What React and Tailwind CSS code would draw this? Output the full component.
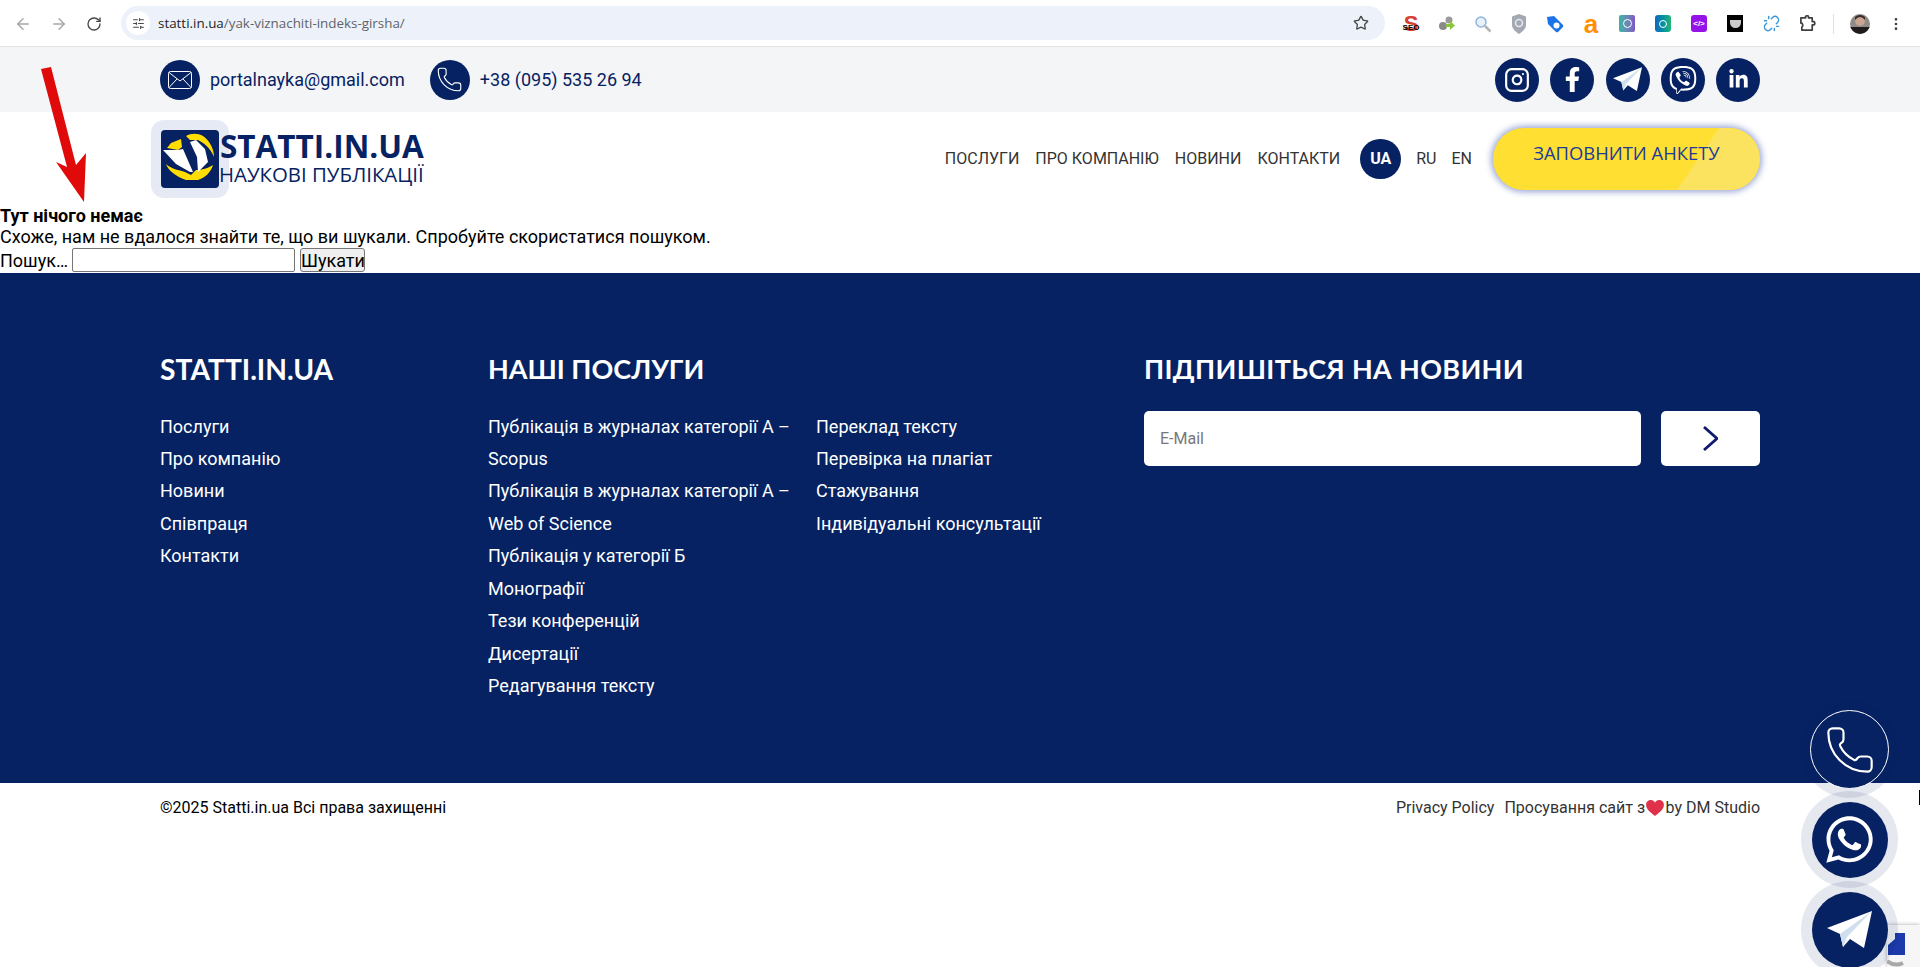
import { Phone, Instagram, ArrowLeft, ArrowRight, RotateCw, Star, EllipsisVertical, SlidersHorizontal, Unlink } from 'lucide-react';
import { FaFacebookF, FaViber, FaLinkedinIn, FaWhatsapp } from 'react-icons/fa';

const NAVY = 'bg-[#062262]';

const PlaneIcon = ({ className }) => (
    <svg viewBox="0 0 45 38" className={className}>
        <polygon points="0,17 45,0 37,37 23,28 16,36 13,23" fill="#ffffff" />
        <polygon points="13,23 45,0 20,26 16,36" fill="#cfdfee" />
    </svg>
);

const MailIcon = () => (
    <svg viewBox="0 0 24 18" className="w-[24px] h-[18px]" fill="none" stroke="#ffffff" strokeWidth="1">
        <rect x="0.5" y="0.5" width="23" height="17" rx="2" />
        <path d="M1 1.5 L12 10 L23 1.5 M1 16.5 L9 8 M23 16.5 L15 8" />
    </svg>
);

const LogoMark = () => (
    <svg viewBox="0 0 58 58" className="w-[58px] h-[58px] block">
        <rect width="58" height="58" rx="4" fill="#062262" />
        <polygon points="20,9 21,17 17,20 6,18 10,13" fill="#ffdd00" />
        <path d="M25 6 C30 3 37 3 42 6 C49 11 53 19 53 27 C51 22 47 15 37 10 L29 10 Z" fill="#ffdd00" />
        <path d="M5 34 C7 40 14 46 25 50 L37 50 C44 48 50 42 52 35 C48 38 40 40 35 40 L30 45 L24 42 C18 40 10 39 5 34 Z" fill="#ffdd00" />
        <polygon points="2,20 17,20 22,19 32,42 29,42 15,34" fill="#ffffff" />
        <polygon points="29,12 35,10 44,19 47,32 37,42 36,27" fill="#ffffff" />
    </svg>
);

// toolbar extension icons, 36px apart
const Extensions = () => (
    <div className="flex items-center">
        <span className="w-9 h-5 relative flex justify-center">
            <span className="font-['Liberation_Sans',sans-serif] font-bold text-[22px] leading-[19px] text-[#d6402f]">S</span>
            <span className="absolute top-[10px] font-['Liberation_Sans',sans-serif] font-bold text-[8px] leading-[8px] text-black">SEO</span>
        </span>
        <span className="w-9 flex justify-center">
            <svg viewBox="0 0 18 18" className="w-[18px] h-[18px]">
                <circle cx="11" cy="5" r="3.5" fill="#9a9a9a" />
                <circle cx="5" cy="11" r="4" fill="#8a8a8a" />
                <polygon points="8,9 12,9 12,6 17,10.5 12,15 12,12 8,12" fill="#8cc63f" />
            </svg>
        </span>
        <span className="w-9 flex justify-center">
            <svg viewBox="0 0 18 18" className="w-[18px] h-[18px]" fill="none">
                <circle cx="7" cy="7" r="5" fill="#e8f1fa" stroke="#8fb4dc" strokeWidth="1.5" />
                <path d="M11 11 L16.5 16.5" stroke="#b4b4b4" strokeWidth="2.5" />
            </svg>
        </span>
        <span className="w-9 flex justify-center">
            <svg viewBox="0 0 16 20" className="w-[16px] h-[20px]">
                <path d="M8 0 L15 2.5 L15 11 C15 15 11 18 8 20 C5 18 1 15 1 11 L1 2.5 Z" fill="#a3a9b3" />
                <circle cx="8" cy="9" r="3.5" fill="none" stroke="#e4e6e9" strokeWidth="1.6" />
            </svg>
        </span>
        <span className="w-9 flex justify-center">
            <svg viewBox="0 0 18 18" className="w-[18px] h-[18px]">
                <path d="M1 2 L8 1 L17 10 Q17.5 11 17 12 L12 17 Q11 17.5 10 17 L2 9 Z" fill="#1a73e8" />
                <circle cx="10.5" cy="10.5" r="3" fill="#ffffff" />
            </svg>
        </span>
        <span className="w-9 flex justify-center font-['Liberation_Sans',sans-serif] font-bold text-[26px] leading-[20px] text-[#ff9000]">a</span>
        <span className="w-9 flex justify-center"><span className="w-4 h-[17px] rounded-[2px] bg-gradient-to-r from-[#2fb5a5] to-[#7e57c2] flex items-center justify-center"><span className="w-[9px] h-[9px] rounded-full border border-white" /></span></span>
        <span className="w-9 flex justify-center"><span className="w-4 h-[17px] rounded-[3px] bg-gradient-to-r from-[#1565c0] to-[#26b573] flex items-center justify-center"><span className="w-2 h-2 rounded-full border border-white" /></span></span>
        <span className="w-9 flex justify-center"><span className="w-4 h-[17px] rounded-[3px] bg-[#9612ea] text-white text-[8px] leading-[17px] text-center font-['Liberation_Sans',sans-serif] font-bold">&lt;/&gt;</span></span>
        <span className="w-9 flex justify-center"><span className="w-4 h-[17px] bg-black flex items-center justify-center"><span className="w-[11px] h-[8px] rounded-b-full bg-[#cccccc]" /></span></span>
        <span className="w-9 flex justify-center"><Unlink size={17} className="text-[#3a96d6]" /></span>
        <span className="w-9 flex justify-center">
            <svg viewBox="0 0 18 18" className="w-[17px] h-[17px]" fill="none" stroke="#3c4043" strokeWidth="1.8" strokeLinejoin="round">
                <path d="M2 3 H7 V1.5 Q9 0 10 1.5 V3 H14 V7 H16 Q17.5 9 16 10.5 H14 V16 H3 V13 Q5 11 3 8.5 H2 Z" />
            </svg>
        </span>
        <span className="w-px h-5 bg-[#d3e3fd] mx-[8px]" />
        <svg viewBox="0 0 20 20" className="w-5 h-5 ml-[8px] rounded-full">
            <rect width="20" height="20" fill="#8f8a88" />
            <circle cx="10" cy="7" r="5" fill="#c9a592" />
            <path d="M5 6 Q10 0 15 6 L15 3 Q10 -1 5 3 Z" fill="#3a2c28" />
            <rect y="13" width="20" height="7" fill="#201c1e" />
        </svg>
        <span className="ml-[17px] w-[18px] flex justify-center"><EllipsisVertical size={16} className="text-[#3c4043]" /></span>
    </div>
);

const BrowserBar = () => (
    <div className="h-[47px] bg-white border-b border-[#e2e3e5] flex items-start font-['Open_Sans',sans-serif]">
        <div className="flex items-center h-[47px] pl-[14px] gap-[18px] w-[121px]">
            <ArrowLeft size={18} className="text-[#a6a8ab]" />
            <ArrowRight size={18} className="text-[#a6a8ab]" />
            <RotateCw size={16} className="text-[#474747]" />
        </div>
        <div className="mt-[6px] w-[1264px] h-[34px] rounded-full bg-[#edf2fa] flex items-center pl-[5px] pr-[16px]">
            <span className="w-[24px] h-[24px] rounded-full bg-white flex items-center justify-center">
                <SlidersHorizontal size={13} className="text-[#474747]" />
            </span>
            <span className="ml-[8px] text-[13.4px] text-[#1f1f1f]">statti.in.ua<span className="text-[#5f6368]">/yak-viznachiti-indeks-girsha/</span></span>
            <Star size={16} className="ml-auto text-[#474747]" />
        </div>
        <div className="h-[47px] ml-[8px] flex items-center"><Extensions /></div>
    </div>
);

const TopBar = () => (
    <div className="h-[65px] bg-[#f4f5f7]">
        <div className="w-[1600px] mx-auto h-full flex items-center justify-between text-[18px] text-[#062262]">
            <div className="flex items-center">
                <span className={`w-10 h-10 rounded-full ${NAVY} flex items-center justify-center`}><MailIcon /></span>
                <span className="ml-[10px]">portalnayka@gmail.com</span>
                <span className={`ml-[25px] w-10 h-10 rounded-full ${NAVY} flex items-center justify-center`}><Phone size={27} strokeWidth={1} className="text-white" /></span>
                <span className="ml-[10px]">+38 (095) 535 26 94</span>
            </div>
            <div className="flex items-center gap-[11.25px] text-white">
                <span className={`w-[44px] h-[44px] rounded-full ${NAVY} flex items-center justify-center`}><Instagram size={26} strokeWidth={2} /></span>
                <span className={`w-[44px] h-[44px] rounded-full ${NAVY} flex items-center justify-center`}><FaFacebookF size={25} /></span>
                <span className={`w-[44px] h-[44px] rounded-full ${NAVY} flex items-center justify-center`}><PlaneIcon className="w-[29px] h-[25px]" /></span>
                <span className={`w-[44px] h-[44px] rounded-full ${NAVY} flex items-center justify-center`}><FaViber size={28} /></span>
                <span className={`w-[44px] h-[44px] rounded-full ${NAVY} flex items-center justify-center`}><FaLinkedinIn size={21} /></span>
            </div>
        </div>
    </div>
);

const Header = () => (
    <div className="h-[93px] bg-white">
        <div className="w-[1600px] mx-auto h-full flex items-center justify-between">
            <div className="flex items-center -ml-[9px]">
                <div className="w-[78px] h-[78px] rounded-[13px] bg-[#e6eaf5] flex items-center justify-center"><LogoMark /></div>
                <div className="-ml-[9px] pb-[5px] text-[#062262] font-['Open_Sans',sans-serif]">
                    <div className="text-[31.5px] leading-[35px] font-bold">STATTI.IN.UA</div>
                    <div className="-ml-px text-[20.4px] leading-[22px] whitespace-nowrap">НАУКОВІ ПУБЛІКАЦІЇ</div>
                </div>
            </div>
            <div className="flex items-center">
                <nav className="flex items-center gap-4 text-[16px] font-normal text-[#333333]">
                    <a>ПОСЛУГИ</a>
                    <a>ПРО КОМПАНІЮ</a>
                    <a>НОВИНИ</a>
                    <a>КОНТАКТИ</a>
                </nav>
                <span className={`ml-[20px] w-[41px] h-[40px] rounded-full ${NAVY} text-white font-bold text-[16px] flex items-center justify-center`}>UA</span>
                <span className="ml-[15px] text-[16px] text-[#333333]">RU</span>
                <span className="ml-[15px] text-[16px] text-[#333333]">EN</span>
                <button className="relative overflow-hidden ml-[21px] w-[267px] h-[62px] rounded-full bg-[#fedf32] shadow-[0_0_6px_2px_rgba(30,60,160,0.45)] text-[#1d3a9c] text-[18.4px] font-['Open_Sans',sans-serif] pb-[12px]">
                    <span className="absolute right-[-40px] top-0 h-full w-[102px] bg-[#fbe25f] -skew-x-[34deg]" />
                    <span className="relative">ЗАПОВНИТИ АНКЕТУ</span>
                </button>
            </div>
        </div>
    </div>
);

const NotFound = () => (
    <div className="h-[68px] bg-white text-[18px] leading-[21px] text-black">
        <div className="font-bold">Тут нічого немає</div>
        <div>Схоже, нам не вдалося знайти те, що ви шукали. Спробуйте скористатися пошуком.</div>
        <form className="flex items-center h-[26px]">
            <label>Пошук…</label>
            <input className="ml-[4px] w-[223px] h-[24px] border border-[#767676] rounded-[2px] bg-white" />
            <button type="button" className="ml-[5px] w-[65px] h-[24px] border border-[#767676] rounded-[3px] bg-[#efefef]">Шукати</button>
        </form>
    </div>
);

const FOOT_HEAD = "leading-[34px] font-bold text-white font-['Lato',sans-serif]";

const LinkList = ({ items }) => (
    <ul className="mt-[24.5px] text-[18px] leading-[32.45px] font-normal text-white">
        {items.map((item) => <li key={item}>{item}</li>)}
    </ul>
);

const Footer = () => (
    <div className={`h-[510px] ${NAVY}`}>
        <div className="w-[1600px] mx-auto pt-[79px] flex">
            <div className="w-[328px]">
                <h3 className={`${FOOT_HEAD} text-[28.2px]`}>STATTI.IN.UA</h3>
                <LinkList items={['Послуги', 'Про компанію', 'Новини', 'Співпраця', 'Контакти']} />
            </div>
            <div className="w-[328px] pr-[16px]">
                <h3 className={`${FOOT_HEAD} text-[27px]`}>НАШІ ПОСЛУГИ</h3>
                <LinkList items={['Публікація в журналах категорії А – Scopus', 'Публікація в журналах категорії А – Web of Science', 'Публікація у категорії Б', 'Монографії', 'Тези конференцій', 'Дисертації', 'Редагування тексту']} />
            </div>
            <div className="w-[328px] pt-[34px]">
                <LinkList items={['Переклад тексту', 'Перевірка на плагіат', 'Стажування', 'Індивідуальні консультації']} />
            </div>
            <div className="flex-1">
                <h3 className={`${FOOT_HEAD} text-[27px] tracking-[0.35px]`}>ПІДПИШІТЬСЯ НА НОВИНИ</h3>
                <div className="mt-[25px] flex gap-[20px]">
                    <input placeholder="E-Mail" className="w-[497px] h-[55px] rounded-[5px] bg-white px-4 text-[16px] placeholder:text-[#777777]" />
                    <button className="w-[99px] h-[55px] rounded-[5px] bg-white flex items-center justify-center">
                        <svg viewBox="0 0 15 25" className="w-[15px] h-[25px] -ml-px" fill="none" stroke="#101a6e" strokeWidth="2.8"><polyline points="1,1 14,12.5 1,24" /></svg>
                    </button>
                </div>
            </div>
        </div>
    </div>
);

const BottomBar = () => (
    <div className="bg-white h-[184px]">
        <div className="w-[1600px] mx-auto pt-[14px] flex justify-between text-[16px] leading-[22px]">
            <span className="text-black">©2025 Statti.in.ua Всі права захищенні</span>
            <span className="flex items-center text-[#333333]">
                <a>Privacy Policy</a>
                <a className="ml-[10px]">Просування сайт з</a>
                <svg viewBox="0 0 20 18" className="w-[18px] h-[16px] ml-[1px] mr-[1.5px]"><path d="M10 18 C4 13 0 10 0 5.5 C0 2 2.5 0 5.5 0 C7.5 0 9 1 10 3 C11 1 12.5 0 14.5 0 C17.5 0 20 2 20 5.5 C20 10 16 13 10 18 Z" fill="#e0314b" /></svg>
                <a>by DM Studio</a>
            </span>
        </div>
    </div>
);

// floating contact buttons + recaptcha stub, pinned over the page
const Floaters = () => (
    <>
        <div className="fixed right-0 bottom-0 w-[33px] h-[42px] bg-[#f6f6f6] shadow-[0_0_4px_rgba(0,0,0,0.35)]">
            <svg viewBox="0 0 33 42" className="w-[33px] h-[42px]">
                <polygon points="1,20 8,14 8,8 18,8 18,30 1,30" fill="#1c3aa9" />
                <path d="M0 36 Q8 42 16 38" fill="none" stroke="#a8a8a8" strokeWidth="4" />
            </svg>
        </div>
        <div className="fixed left-[1801px] top-[701px] flex flex-col items-center -space-y-[7px]">
            <span className="w-[97px] h-[97px] rounded-full bg-[#062262]/10 flex items-center justify-center">
                <span className={`w-[79px] h-[79px] rounded-full ${NAVY} border border-white flex items-center justify-center`}><Phone size={52} strokeWidth={1} className="text-white" /></span>
            </span>
            <span className="w-[97px] h-[97px] rounded-full bg-[#062262]/10 flex items-center justify-center">
                <span className={`w-[76px] h-[76px] rounded-full ${NAVY} flex items-center justify-center`}><FaWhatsapp size={53} className="text-white" /></span>
            </span>
            <span className="w-[97px] h-[97px] rounded-full bg-[#062262]/10 flex items-center justify-center">
                <span className={`w-[76px] h-[76px] rounded-full ${NAVY} flex items-center justify-center`}><PlaneIcon className="w-[45px] h-[38px]" /></span>
            </span>
        </div>
        <span className="fixed left-[1919px] top-[790px] w-px h-[15px] bg-black" />
    </>
);

const RedArrow = () => (
    <svg viewBox="0 0 100 140" className="absolute left-0 top-[66px] w-[100px] h-[140px]">
        <polygon points="41,3 51,1 76,99 86,87 84,136 56,96 67,101" fill="#e00a0a" />
    </svg>
);

const App = () => (
    <div className="relative min-h-screen bg-white overflow-hidden font-['Roboto',sans-serif]">
        <BrowserBar />
        <TopBar />
        <Header />
        <NotFound />
        <Footer />
        <BottomBar />
        <RedArrow />
        <Floaters />
    </div>
);

export default App;
